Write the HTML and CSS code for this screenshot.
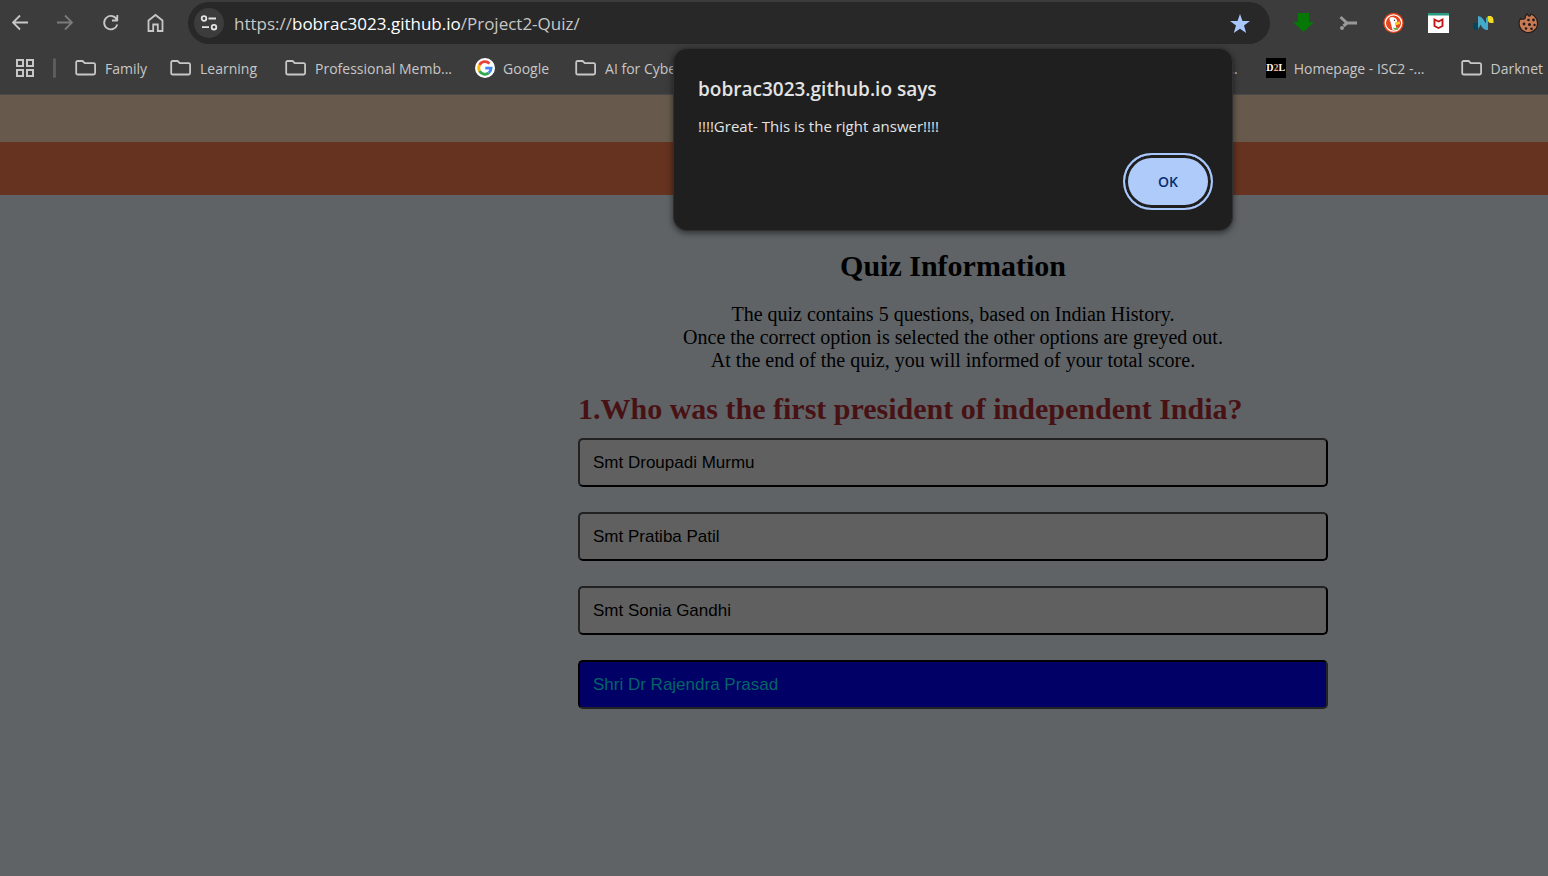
FILE: index.html
```html
<!DOCTYPE html>
<html lang="en">
<head>
<meta charset="utf-8">
<title>Project2 Quiz</title>
<link rel="stylesheet" href="styles.css">
</head>
<body>
<svg class="defs" aria-hidden="true">
  <symbol id="folder" viewBox="0 0 22 16"><path d="M1.2 13V2.5Q1.2 1 2.7 1H7.6L9.8 3.2H18.6Q20.1 3.2 20.1 4.7V13Q20.1 14.5 18.6 14.5H2.7Q1.2 14.5 1.2 13Z" fill="none" stroke="currentColor" stroke-width="1.8"/></symbol>
</svg>
<header class="browser">
  <div class="toolbar">
    <nav class="nav" aria-label="Browser navigation">
      <button class="tool" aria-label="Back"><svg width="18" height="18" viewBox="0 0 18 18"><path d="M16 8.500H1.500M8 1.500L1 8.500L8 15.500"/></svg></button>
      <button class="tool muted" aria-label="Forward"><svg width="18" height="18" viewBox="0 0 18 18"><path d="M0 8.500H14.500M8 1.500L15 8.500L8 15.500"/></svg></button>
      <button class="tool" aria-label="Reload"><svg width="18" height="18" viewBox="0 0 18 18"><path d="M15.600 6.500H10M15.300 1V7M15 6A6.700 6.700 0 1 0 15.300 10.500"/></svg></button>
      <button class="tool" aria-label="Home"><svg width="18" height="20" viewBox="0 0 18 20"><path d="M1.500 18V7.500L8.500 2L15.500 7.500V18H10.800V11.500H6.200V18Z"/></svg></button>
    </nav>
    <div class="address">
      <button class="site" aria-label="Site information"><svg width="18" height="16" viewBox="0 0 18 16"><circle cx="4" cy="3.500" r="2.300"/><path d="M8.500 3.500H16M2 12.200H9"/><circle cx="14" cy="12.200" r="2.300"/></svg></button>
      <a class="url" href="#quiz">https://<span class="host">bobrac3023.github.io</span>/Project2-Quiz/</a>
      <button class="star" aria-label="Edit bookmark"><svg width="20" height="22" viewBox="0 0 20 20"><path fill="#a8c7fa" d="M10 1L12.500 8H20L14 12.500L16.200 20L10 15.700L3.800 20L6 12.500L0 8H7.500Z"/></svg></button>
    </div>
    <div class="extensions">
      <button class="ext" aria-label="Downloads"><svg width="22" height="22" viewBox="0 0 22 22"><path fill="#057805" d="M5 1H16V10H21L10.500 20L0 10H5Z"/></svg></button>
      <button class="ext" aria-label="Branch tool"><svg width="22" height="22" viewBox="0 0 22 22"><path d="M2.500 5L9 11H19" fill="none" stroke="#999" stroke-width="3"/><path d="M9 11L5.500 14" stroke="#999" stroke-width="3"/><circle cx="4" cy="16" r="2" fill="#999"/></svg></button>
      <button class="ext" aria-label="DuckDuckGo"><svg width="22" height="22" viewBox="0 0 22 22"><circle cx="10.500" cy="11" r="10.200" fill="#e5451f"/><circle cx="10.500" cy="11" r="8.200" fill="none" stroke="#fff" stroke-width="1.300"/><path fill="#fff" d="M6.500 6Q8.500 4.500 11 5.500Q14.500 6.500 14 10L12.500 13L13.500 16.500Q12 18.500 9.500 18L7.500 10Q6.500 8 6.500 6Z"/><path fill="#fdc928" d="M12 10L17 9.500L17 12L12 13.500Z"/><circle cx="11.500" cy="8.200" r=".7" fill="#234"/><path fill="#5bb947" d="M10 15.500L12 16L15 15V18L11 17.500Z"/></svg></button>
      <button class="ext" aria-label="McAfee"><svg width="22" height="22" viewBox="0 0 22 22"><path fill="#fff" d="M0 1H21V21H0Z"/><path fill="#2a9c82" d="M0 1H21V3.500H0Z"/><path d="M6.500 7.500L10.500 9.500L14.500 7.500V14L10.500 16L6.500 14Z" fill="none" stroke="#c01818" stroke-width="1.900"/></svg></button>
      <button class="ext" aria-label="N extension"><svg width="22" height="22" viewBox="0 0 22 22"><path fill="#064458" d="M0 11H5V18H3Q0 17 0 14Z"/><path fill="#45a9c9" d="M5 4Q8 4 10 7L13 11.500L15 13V18Q11 18.500 9 15L5 10Z"/><path fill="#45a9c9" d="M5 10H7V14L5 17ZM13 6L15 4V13H13Z"/><path fill="#f0dc20" d="M15 4H18Q20.500 5 20.500 8V11H18Q15 11 15 8Z"/></svg></button>
      <button class="ext" aria-label="Cookie editor"><svg width="22" height="22" viewBox="0 0 22 22"><path fill="#c77b55" stroke="#271b18" stroke-width="1.200" d="M9.500 2Q10 4.500 12 4L13 2Q19.500 5 19.500 11A9.200 9.200 0 1 1 2.500 6.500Q5 8 7 6.500Q7 3 9.500 2Z"/><g fill="#221917"><circle cx="10.500" cy="8" r="1.300"/><circle cx="15.500" cy="8" r="1.400"/><circle cx="11.500" cy="12.500" r="1.500"/><circle cx="6" cy="12" r="1.400"/><circle cx="16.500" cy="13" r="1.200"/><circle cx="8" cy="16.500" r="1.300"/><circle cx="13.500" cy="16.800" r="1.300"/></g></svg></button>
    </div>
  </div>
  <nav class="bookmarks" aria-label="Bookmarks">
    <button class="apps" aria-label="Apps"><svg width="18" height="18" viewBox="0 0 18 18"><path d="M1 1H7V7H1ZM11 1H17V7H11ZM1 11H7V17H1ZM11 11H17V17H11Z"/></svg></button>
    <span class="divider"></span>
    <a class="bookmark" href="#family"><svg class="folder"><use href="#folder"/></svg>Family</a>
    <a class="bookmark learning" href="#learning"><svg class="folder"><use href="#folder"/></svg>Learning</a>
    <a class="bookmark" href="#professional"><svg class="folder"><use href="#folder"/></svg>Professional Memb...</a>
    <a class="bookmark google" href="#google"><svg width="20" height="20" viewBox="0 0 20 20"><circle cx="10" cy="10" r="10" fill="#fff"/><g fill="none" stroke-width="2.800"><path stroke="#ea4335" d="M4.500 7A6.200 6.200 0 0 1 14.500 5.600"/><path stroke="#fbbc05" d="M4.500 7A6.200 6.200 0 0 0 4.500 13"/><path stroke="#34a853" d="M4.500 13A6.200 6.200 0 0 0 13.800 14.900"/><path stroke="#4285f4" d="M13.800 14.900A6.200 6.200 0 0 0 16.100 10.200H10.300"/></g></svg>Google</a>
    <a class="bookmark" href="#ai"><svg class="folder"><use href="#folder"/></svg>AI for Cyber</a>
    <div class="bookmark-end">
      <a class="bookmark" href="#more">...</a>
      <a class="bookmark isc2" href="#isc2"><span class="d2l">D<span class="two">2</span>L</span>Homepage - ISC2 -...</a>
      <a class="bookmark" href="#darknet"><svg class="folder"><use href="#folder"/></svg>Darknet</a>
    </div>
  </nav>
</header>
<main class="page" id="quiz">
  <div class="band sand"></div>
  <div class="band rust"></div>
  <div class="content">
    <section class="info">
      <h1 class="heading">Quiz Information</h1>
      <p class="intro">The quiz contains 5 questions, based on Indian History.<br>Once the correct option is selected the other options are greyed out.<br>At the end of the quiz, you will informed of your total score.</p>
    </section>
    <section class="question">
      <h2 class="heading prompt">1.Who was the first president of independent India?</h2>
      <div class="options">
        <button class="option">Smt Droupadi Murmu</button>
        <button class="option">Smt Pratiba Patil</button>
        <button class="option">Smt Sonia Gandhi</button>
        <button class="option chosen">Shri Dr Rajendra Prasad</button>
      </div>
    </section>
  </div>
</main>
<div class="overlay">
  <div class="dialog" role="alertdialog" aria-labelledby="says" aria-describedby="message">
    <h2 class="says" id="says">bobrac3023.github.io says</h2>
    <p class="message" id="message">!!!!Great- This is the right answer!!!!</p>
    <button class="ok">OK</button>
  </div>
</div>
</body>
</html>
```
FILE: styles.css
```css
* { box-sizing: border-box; }

:root {
  --page-start: 358px;
  --ui: "Open Sans", "Noto Sans", sans-serif;
}

body {
  display: flex;
  flex-direction: column;
  min-height: 100vh;
  margin: 0;
  overflow-x: hidden;
  background: #5f6366;
  font-family: "Liberation Serif", serif;
}

button {
  padding: 0;
  border: 0;
  background: none;
  color: inherit;
  font: inherit;
}

svg { display: block; flex: none; }
.defs { position: absolute; width: 0; height: 0; }

.browser {
  background: #3c3c3c;
  border-bottom: 1px solid #4a4a4a;
  color: #c7c7c7;
  font-family: var(--ui);
}

.toolbar {
  display: flex;
  align-items: center;
  height: 46px;
  padding-left: 12px;
}

.nav { display: flex; gap: 27px; align-items: center; }
.tool svg { fill: none; stroke: #c7c7c7; stroke-width: 1.8; }
.tool.muted svg { stroke: #7b7b7b; }

.address {
  display: flex;
  flex: 1;
  align-items: center;
  height: 42px;
  margin-left: 23px;
  padding: 0 20px 0 6px;
  border-radius: 21px;
  background: #282828;
}

.site {
  display: grid;
  place-items: center;
  width: 30px;
  height: 30px;
  border-radius: 50%;
  background: #3c3c3c;
}
.site svg { fill: none; stroke: #e3e3e3; stroke-width: 1.8; }

.url {
  flex: 1;
  margin-left: 10px;
  color: #c7c7c7;
  font-size: 17px;
  text-decoration: none;
}
.host { color: #fff; }

.extensions {
  display: flex;
  flex: none;
  gap: 23px;
  margin: 0 8px 0 23px;
}

.bookmarks {
  display: flex;
  align-items: center;
  height: 48px;
  padding: 0 0 4px 16px;
  overflow: hidden;
  font-size: 14px;
  white-space: nowrap;
}
.apps svg { fill: none; stroke: #c7c7c7; stroke-width: 2; }
.divider {
  width: 3px;
  height: 20px;
  margin: 0 19px;
  border-radius: 2px;
  background: #5c5c5c;
}
.bookmark {
  display: flex;
  align-items: center;
  gap: 8px;
  margin-right: 23px;
  color: #c7c7c7;
  text-decoration: none;
}
.learning { margin-right: 28px; }
.google { margin-right: 26px; }
.folder { width: 22px; height: 16px; }
.bookmark-end { display: flex; margin-left: auto; }
.bookmark-end .bookmark { margin-right: 28px; }
.bookmark-end .isc2 { margin-right: 36px; }
.bookmark-end .bookmark:last-child { margin-right: 5px; }
.d2l {
  width: 20px;
  background: #000;
  color: #fff;
  font: bold 10px/20px "Liberation Serif", serif;
  text-align: center;
}
.two { color: #eda884; }

.page { flex: 1; }
.band.sand { height: 47px; background: #675a4d; }
.band.rust { height: 53px; background: #653320; }

.content {
  display: flex;
  flex-direction: column;
  align-items: center;
  padding: 54px 0 40px var(--page-start);
}
.info { text-align: center; }
.heading {
  margin: 0;
  font-size: 30px;
  line-height: 34px;
}
.intro {
  margin: 20px 0;
  font-size: 20px;
  line-height: 23px;
}
.question { width: 100%; max-width: 750px; }
.prompt { color: #481114; }
.options {
  display: flex;
  flex-direction: column;
  gap: 25px;
  margin-top: 12px;
}
.option {
  padding: 13px;
  border: 2px solid;
  border-color: #222 #000 #000 #222;
  border-radius: 5px;
  background: #606060;
  color: #000;
  font: 17px/19px "Liberation Sans", sans-serif;
  text-align: left;
}
.option.chosen {
  border-color: #000 #222 #222 #000;
  background: #000066;
  color: #006666;
}

.overlay {
  position: absolute;
  top: 48px;
  left: 0;
  right: 0;
  display: flex;
  justify-content: center;
  padding-left: var(--page-start);
}
.dialog {
  display: flex;
  flex-direction: column;
  width: 560px;
  padding: 26px 19px 20px 24px;
  border: 1px solid #303030;
  border-radius: 14px;
  background: #1f1f1f;
  box-shadow: 0 2px 6px #0008;
  color: #e3e3e3;
  font-family: var(--ui);
}
.says {
  margin: 0;
  font-size: 19px;
  font-weight: 600;
  line-height: 28px;
}
.message { margin: 11px 0 15px; font-size: 15px; line-height: 24px; }
.ok {
  align-self: flex-end;
  width: 90px;
  height: 57px;
  border: 2px solid #a8c7fa;
  border-radius: 29px;
  background: #aecbfa;
  box-shadow: inset 0 0 0 3px #1f1f1f;
  color: #062e6f;
  font-size: 14px;
  font-weight: 600;
}
```
